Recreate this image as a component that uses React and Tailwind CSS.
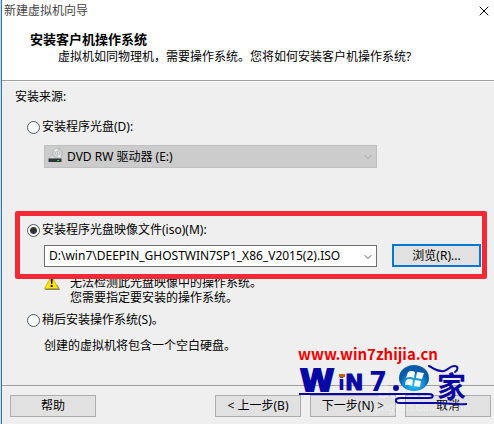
import React, { useState } from "react";
import { ChevronDown, X } from "lucide-react";

function DiscIcon() {
  return (
    <svg className="pointer-events-none absolute left-1 top-[3px] h-4 w-4" viewBox="0 0 16 16" aria-hidden="true">
      <path d="M1 10 4 8h10l-1 2z" fill="#e9e9e9" stroke="#b5b5b5" strokeWidth=".5" />
      <circle cx="9.5" cy="5.2" r="4.8" fill="#d3d6d6" stroke="#a0a5a5" strokeWidth=".7" />
      <path d="M9.500 5.200 6 2.200A4.600 4.600 0 0 1 9 .7z" fill="#f4f4f4" />
      <path d="M9.500 5.200 13 8.200a4.600 4.600 0 0 1-2.600 1.500z" fill="#eef1ee" />
      <circle cx="9.5" cy="5.2" r="1.9" fill="#f7f7f7" stroke="#a0a5a5" strokeWidth=".7" />
      <circle cx="9.5" cy="5.2" r=".7" fill="#a0a5a5" />
      <rect x=".5" y="10.500" width="13" height="3.500" fill="#303436" />
      <rect x="9" y="12" width="2" height="1" fill="#1ff03a" />
    </svg>
  );
}

function WarningIcon() {
  return (
    <svg className="h-4 w-4" viewBox="0 0 16 16" aria-hidden="true">
      <path d="M1 14.500h14.500L13 10" fill="#77766a" stroke="#77766a" strokeWidth=".8" />
      <path d="M7.500 1 14.400 13.500H.5z" fill="#ffe500" stroke="#c9ad00" strokeWidth=".8" strokeLinejoin="round" />
      <path d="M6.600 3.500h2.200L8.300 9H7.100z" fill="#111" />
      <rect x="6.700" y="10" width="2" height="2" fill="#111" />
    </svg>
  );
}

function SourceRadio({ id, value, source, onChange, children }) {
  return (
    <div className="flex h-4 items-center gap-0.5 pl-3">
      <input
        id={id}
        type="radio"
        name="source"
        value={value}
        checked={source === value}
        onChange={() => onChange(value)}
        className="m-0 h-[13px] w-[13px] shrink-0 appearance-none rounded-full border border-[#4c5965] bg-white checked:bg-[radial-gradient(circle,#333_0,#333_3px,#fff_4px)]"
      />
      <label htmlFor={id}>{children}</label>
    </div>
  );
}

function FooterButton({ children }) {
  return (
    <button type="button" className="h-[22px] w-[86px] border border-[#adadad] bg-[#e1e1e1] whitespace-nowrap">
      {children}
    </button>
  );
}

function SiteBadge() {
  return (
    <div className="pointer-events-none absolute right-[22px] bottom-0 h-[80px] w-[174px]">
      <svg className="h-full w-full overflow-visible" viewBox="298 344 174 80">
        <g fill="#fff" fillOpacity=".4" fontFamily="Noto Sans, sans-serif">
          <text x="377" y="398" fontSize="19" fontWeight="700">Baidu</text>
          <text x="375" y="411" fontSize="11">jingyan.baidu.com</text>
        </g>
        <text x="298" y="360" fontSize="15" fontWeight="700" fill="#ee0000" fontFamily="Noto Sans CJK SC, sans-serif">
          www.win7zhijia.cn
        </text>
        <g fill="#0808a5" fontFamily="DejaVu Sans, sans-serif" fontWeight="700">
          <text x="300" y="391" fontSize="31" stroke="#0808a5" strokeWidth="2">W</text>
          <text x="338" y="390" fontSize="20">i</text>
          <text x="345" y="390" fontSize="22" stroke="#0808a5" strokeWidth="1">N</text>
          <text x="369" y="391" fontSize="26">7</text>
        </g>
        <rect x="339" y="374" width="6" height="3" fill="#d75a09" />
        <circle cx="396" cy="388" r="3" fill="#0808a5" />
        <path d="M299 394h98" fill="none" stroke="#0808a5" strokeWidth="2" />
        <path d="M397 394h32c5 0 5 4 0 4h-29c-5 0-6 5 0 5h36c10 0 18 2 31 1" fill="none" stroke="#0808a5" strokeWidth="2" />
        <ellipse cx="414" cy="378" rx="15" ry="13" fill="url(#orb)" />
        <g fill="#fff">
          <path d="M408 372q4-2 7 0l-1 6q-4-2-8 0z" />
          <path d="m417 372 7 1-2 6-6-1z" />
          <path d="M406 380q4-2 7 0l-1 6q-4-2-7-1z" />
          <path d="m415 380 6 1-1 6-6-1z" />
        </g>
        <path d="M429 366c6 3 9 6 15 5 4-1 6-5 10-5 5 0 4 4 1 6" fill="none" stroke="#0808a5" strokeWidth="2" strokeLinecap="round" />
        <text x="437" y="398" fontSize="29" fontWeight="700" fill="#0808a5" fontFamily="Noto Sans CJK SC, sans-serif">家</text>
        <defs>
          <radialGradient id="orb" cy=".75">
            <stop offset="0" stopColor="#25c5f2" />
            <stop offset=".65" stopColor="#168ed7" />
            <stop offset="1" stopColor="#075ba9" />
          </radialGradient>
        </defs>
      </svg>
    </div>
  );
}

export default function App() {
  const [source, setSource] = useState("iso");
  return (
    <main className="relative flex min-h-screen flex-col border-l border-[#d5d5d5] bg-[#efefef] font-['Noto_Sans','Noto_Sans_CJK_SC',sans-serif] text-xs leading-4 text-black">
      <div className="flex flex-1 flex-col border-l border-[#1f7bc4]">
        <header className="h-[81px] border-b border-[#a0a0a0] bg-white">
          <div className="flex h-[22px] items-center justify-between px-0.5">
            <span className="text-[#444]">新建虚拟机向导</span>
            <button type="button" aria-label="关闭">
              <X className="h-4 w-4" strokeWidth={1.5} />
            </button>
          </div>
          <h1 className="pt-2 pl-7 text-[13px] leading-[18px] font-bold">安装客户机操作系统</h1>
          <p className="pl-14 leading-[18px]">虚拟机如同物理机，需要操作系统。您将如何安装客户机操作系统?</p>
        </header>

        <form className="flex flex-1 flex-col border-t border-white px-[13px] pt-[7px]" onSubmit={(e) => e.preventDefault()}>
          <p>安装来源:</p>
          <div className="pt-[14px]">
            <SourceRadio id="disc" value="disc" source={source} onChange={setSource}>安装程序光盘(D):</SourceRadio>
          </div>
          <div className="relative mt-2.5 mr-[104px] ml-[29px]">
            <select aria-label="光盘驱动器" disabled className="block h-[23px] w-full appearance-none border border-[#bfbfbf] bg-[#cccccc] pl-[22px] text-black opacity-100">
              <option>DVD RW 驱动器 (E:)</option>
            </select>
            <DiscIcon />
            <ChevronDown className="pointer-events-none absolute top-1.5 right-[3px] h-3 w-3 text-[#a3a3a3]" />
          </div>

          <div className="relative mt-[54px]">
            <SourceRadio id="iso" value="iso" source={source} onChange={setSource}>安装程序光盘映像文件(iso)(M):</SourceRadio>
            <div className="mt-1.5 flex items-center gap-[15px] pl-[29px]">
              <div className="relative flex-1">
                <select aria-label="映像文件" className="block h-[22px] w-full appearance-none border border-[#707070] bg-white pl-1">
                  <option>D:\win7\DEEPIN_GHOSTWIN7SP1_X86_V2015(2).ISO</option>
                </select>
                <ChevronDown className="pointer-events-none absolute top-1.5 right-[3px] h-3 w-3 text-[#555]" />
              </div>
              <button type="button" className="h-[23px] w-[89px] border-2 border-[#0078d7] bg-[#e1e1e1] leading-[18px]">浏览(R)...</button>
            </div>
            <div className="pointer-events-none absolute -top-[11px] -right-[6px] -bottom-3 left-0 z-10 rounded-xs border-5 border-[#f42936]" />
          </div>

          <div className="mt-2 flex gap-2.5 pl-[29px]">
            <WarningIcon />
            <p className="leading-[15px]">无法检测此光盘映像中的操作系统。<br />您需要指定要安装的操作系统。</p>
          </div>
          <div className="pt-[7px]">
            <SourceRadio id="later" value="later" source={source} onChange={setSource}>稍后安装操作系统(S)。</SourceRadio>
          </div>
          <p className="mt-2.5 pl-[29px]">创建的虚拟机将包含一个空白硬盘。</p>
        </form>

        <footer className="flex h-[39px] items-start justify-between border-t border-[#a0a0a0] pt-[9px] pr-[3px] pl-2">
          <FooterButton>帮助</FooterButton>
          <div className="flex gap-[9px]">
            <FooterButton>&lt; 上一步(B)</FooterButton>
            <FooterButton>下一步(N) &gt;</FooterButton>
            <FooterButton>取消</FooterButton>
          </div>
        </footer>
      </div>
      <SiteBadge />
    </main>
  );
}
